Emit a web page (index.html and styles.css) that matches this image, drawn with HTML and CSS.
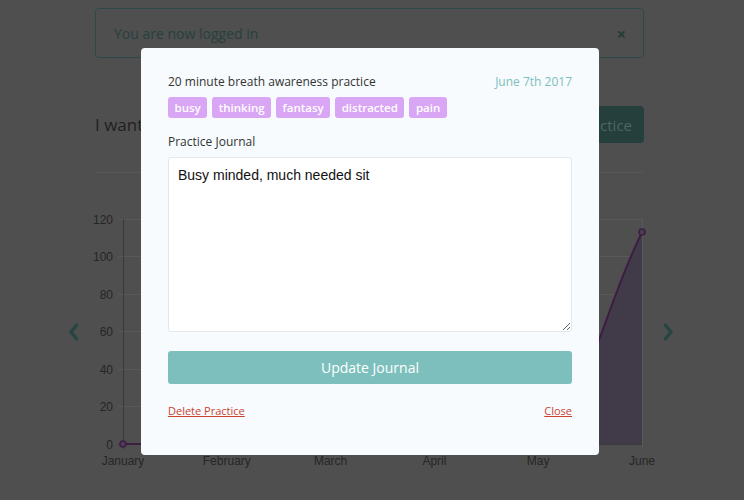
FILE: index.html
```html
<!DOCTYPE html>
<html lang="en">
<head>
<meta charset="utf-8">
<title>Practice Journal</title>
<link rel="stylesheet" href="styles.css">
</head>
<body>
<main class="page">
  <div class="alert">
    <span class="alert-text">You are now logged in</span>
    <span class="alert-close">×</span>
  </div>

  <div class="intro">
    <h2 class="intro-title">I want to sit</h2>
    <button class="intro-btn">Log a Practice</button>
  </div>

  <hr class="rule">

  <div class="chart-row">
    <button class="nav-arrow nav-left" aria-label="Previous">
      <svg width="12" height="20" viewBox="0 0 12 20"><polyline points="9.5,2 3,10 9.5,18" fill="none" stroke="#244542" stroke-width="3.2" stroke-linejoin="miter"/></svg>
    </button>
    <svg class="chart" width="560" height="270" viewBox="0 0 560 270">
      <g class="grid" stroke="#595959" stroke-width="1">
        <line x1="23" y1="15.5" x2="547" y2="15.5"/>
        <line x1="23" y1="52.5" x2="547" y2="52.5"/>
        <line x1="23" y1="90.5" x2="547" y2="90.5"/>
        <line x1="23" y1="127.5" x2="547" y2="127.5"/>
        <line x1="23" y1="165.5" x2="547" y2="165.5"/>
        <line x1="23" y1="202.5" x2="547" y2="202.5"/>
        <line x1="131.8" y1="15" x2="131.8" y2="245"/>
        <line x1="235.6" y1="15" x2="235.6" y2="245"/>
        <line x1="339.4" y1="15" x2="339.4" y2="245"/>
        <line x1="443.2" y1="15" x2="443.2" y2="245"/>
        <line x1="547.5" y1="15" x2="547.5" y2="245"/>
      </g>
      <g stroke="#3a3a3a" stroke-width="1">
        <line x1="28.5" y1="15" x2="28.5" y2="245"/>
        <line x1="23" y1="240.5" x2="547" y2="240.5"/>
      </g>
      <path d="M28 240 L443.2 240 C501 181.1 505.4 112.9 547 28.1 L547 240 Z" fill="#413a48"/>
      <path d="M28 240 L443.2 240 C501 181.1 505.4 112.9 547 28.1" fill="none" stroke="#3d1d44" stroke-width="2"/>
      <g fill="#4d3d53" stroke="#3d1d44" stroke-width="1.5">
        <circle cx="28" cy="240" r="3"/>
        <circle cx="547" cy="28.1" r="3"/>
      </g>
      <g class="ylabels" text-anchor="end">
        <text x="18" y="19.5">120</text>
        <text x="18" y="57">100</text>
        <text x="18" y="94.5">80</text>
        <text x="18" y="132">60</text>
        <text x="18" y="169.5">40</text>
        <text x="18" y="207">20</text>
        <text x="18" y="244.5">0</text>
      </g>
      <g class="xlabels" text-anchor="middle">
        <text x="28" y="261">January</text>
        <text x="131.8" y="261">February</text>
        <text x="235.6" y="261">March</text>
        <text x="339.4" y="261">April</text>
        <text x="443.2" y="261">May</text>
        <text x="547" y="261">June</text>
      </g>
    </svg>
    <button class="nav-arrow nav-right" aria-label="Next">
      <svg width="12" height="20" viewBox="0 0 12 20"><polyline points="2.5,2 9,10 2.5,18" fill="none" stroke="#244542" stroke-width="3.2" stroke-linejoin="miter"/></svg>
    </button>
  </div>
</main>

<div class="modal" role="dialog">
  <div class="modal-head">
    <span class="modal-title">20 minute breath awareness practice</span>
    <span class="modal-date">June 7th 2017</span>
  </div>
  <div class="tags">
    <span class="tag">busy</span>
    <span class="tag">thinking</span>
    <span class="tag">fantasy</span>
    <span class="tag">distracted</span>
    <span class="tag">pain</span>
  </div>
  <label class="journal-label" for="journal">Practice Journal</label>
  <textarea id="journal" class="journal">Busy minded, much needed sit</textarea>
  <button class="update-btn">Update Journal</button>
  <div class="modal-foot">
    <a class="foot-link" href="#">Delete Practice</a>
    <a class="foot-link" href="#">Close</a>
  </div>
</div>
</body>
</html>
```

FILE: styles.css
```css
* { box-sizing: border-box; }

html, body {
  margin: 0;
  padding: 0;
}

body {
  background: #4f4f4f;
  font-family: "Open Sans", "Noto Sans", sans-serif;
  width: 744px;
  height: 500px;
  overflow: hidden;
}

.page {
  width: 549px;
  margin-left: 95px;
  padding-top: 8px;
}

.alert {
  height: 50px;
  border: 1px solid #2e4a48;
  border-radius: 4px;
  display: flex;
  align-items: center;
  justify-content: space-between;
  padding: 1px 17px 0 18px;
  color: #27403d;
}

.alert-text {
  font-size: 14px;
}

.alert-close {
  font-size: 16px;
  font-weight: 700;
  color: #263a39;
}

.intro {
  margin-top: 48px;
  height: 37px;
  display: flex;
  align-items: center;
  justify-content: space-between;
}

.intro-title {
  margin: 0;
  font-size: 17px;
  line-height: 20px;
  font-weight: 400;
  color: #1f1f1f;
}

.intro-btn {
  height: 37px;
  border: 0;
  border-radius: 4px;
  background: #243f3c;
  color: #4b6864;
  font-family: inherit;
  font-size: 15px;
  padding: 0 12px;
}

.rule {
  margin: 29px 0 0 0;
  border: 0;
  border-top: 1px solid #575757;
  height: 0;
}

.chart-row {
  display: flex;
  align-items: flex-start;
  margin-top: 31px;
  margin-left: -31px;
  margin-right: -60px;
}

.nav-arrow {
  flex: none;
  width: 20px;
  height: 20px;
  padding: 0;
  border: 0;
  background: none;
  display: flex;
  align-items: center;
  justify-content: center;
  margin-top: 118px;
}

.nav-left {
  margin-right: 11px;
}

.nav-right {
  margin-left: 3px;
}

.chart {
  flex: none;
  display: block;
  overflow: visible;
  font-family: "Liberation Sans", Arial, sans-serif;
  font-size: 12px;
}

.chart text {
  fill: #262626;
}

.modal {
  position: fixed;
  top: 48px;
  left: 141px;
  width: 458px;
  height: 407px;
  background: #f7fbfd;
  border-radius: 4px;
  padding: 24px 27px 0 27px;
  display: flex;
  flex-direction: column;
}

.modal-head {
  display: flex;
  justify-content: space-between;
  align-items: center;
  height: 18px;
  font-size: 12px;
}

.modal-title {
  color: #333;
}

.modal-date {
  color: #7cc0bd;
}

.tags {
  display: flex;
  gap: 5px;
  margin-top: 7px;
}

.tag {
  height: 21px;
  display: flex;
  align-items: center;
  padding: 0 6.5px;
  background: #d9a6f6;
  color: #fff;
  border-radius: 3px;
  font-size: 11.5px;
  font-weight: 600;
}

.journal-label {
  margin-top: 15px;
  height: 18px;
  line-height: 18px;
  font-size: 12px;
  color: #333;
}

.journal {
  margin-top: 6px;
  height: 175px;
  width: 100%;
  resize: vertical;
  background: #fff;
  border: 1px solid #e4e8eb;
  border-radius: 3px;
  padding: 8px 9px;
  font-family: "Liberation Sans", Arial, sans-serif;
  font-size: 14px;
  line-height: 18px;
  color: #111;
}

.update-btn {
  margin-top: 19px;
  height: 33px;
  width: 100%;
  border: 0;
  border-radius: 3px;
  background: #7dbfbd;
  color: #fff;
  font-family: inherit;
  font-size: 14px;
  font-weight: 500;
}

.modal-foot {
  margin-top: 19px;
  display: flex;
  justify-content: space-between;
  height: 16px;
  line-height: 16px;
}

.foot-link {
  font-size: 11px;
  color: #c9432f;
  text-decoration: underline;
}
```
